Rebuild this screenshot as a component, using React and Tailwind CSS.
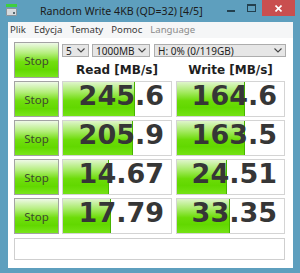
import React from 'react';

const rows = [
  { read: '245.6', write: '164.6', rw: 72, ww: 68 },
  { read: '205.9', write: '163.5', rw: 70, ww: 68 },
  { read: '14.67', write: '24.51', rw: 46, ww: 50 },
  { read: '17.79', write: '33.35', rw: 48, ww: 53 },
];

const greenBar =
  'bg-[linear-gradient(to_bottom,#dff5cb_0%,#a4ea62_30%,#6cdc08_55%,#62d800_75%,#74e214_100%)]';

function Chevron() {
  return (
    <svg width="8" height="5" viewBox="0 0 8 5" className="shrink-0">
      <path d="M0.5 0.5 L4 4 L7.5 0.5" fill="none" stroke="#444" strokeWidth="1.1" />
    </svg>
  );
}

function Dropdown({ className, children }) {
  return (
    <div
      className={`h-[13px] flex items-center justify-between pl-[3px] pr-[3px] border border-[#adadad] bg-[#e6e6e6] text-[10px] leading-none text-[#222] ${className}`}
    >
      <span>{children}</span>
      <Chevron />
    </div>
  );
}

function StopButton() {
  return (
    <div className="w-[45px] h-full flex items-center justify-center border border-[#a3a3a3] bg-[linear-gradient(to_bottom,#eef9e6_0%,#b4ee7c_30%,#72de10_55%,#62d800_78%,#7ae61c_100%)]">
      <span className="text-[11.5px] leading-none pt-[2px] text-[#3d4a2e]">Stop</span>
    </div>
  );
}

function Cell({ value, bar, className }) {
  return (
    <div className={`relative h-full border border-[#d4d4d4] bg-white overflow-hidden ${className}`}>
      <div
        className={`absolute left-0 top-0 bottom-0 border-r border-[#48b400] ${greenBar}`}
        style={{ width: bar }}
      />
      <div className="relative text-right pr-[7px] font-['DejaVu_Sans',sans-serif] font-bold text-[27px] leading-[28px] text-[#363636]">
        {value}
      </div>
    </div>
  );
}

export default function App() {
  return (
    <div className="w-[300px] h-[273px] bg-[#5e9fbe] flex flex-col overflow-hidden font-['Noto_Sans',sans-serif]">
      {/* Title bar */}
      <div className="h-[22px] flex items-start shrink-0">
        <div className="ml-[6px] mt-[4px] w-[11px] h-[12px] flex flex-col">
          <div className="h-[3px] bg-[#3fcf3f]" />
          <div className="mt-[1px] h-[8px] rounded-[1px] bg-[#d6dadd] border border-[#8c959b] flex items-end justify-end p-[1px]">
            <div className="w-[2px] h-[2px] bg-[#5a6a72]" />
          </div>
        </div>
        <div className="ml-[23px] mt-[4px] text-[10.6px] leading-[14px] text-[#1b1b1b] whitespace-nowrap">
          Random Write 4KB (QD=32) [4/5]
        </div>
        <div className="flex-1" />
        <div className="mt-[10px] w-[8px] h-[2px] bg-[#23404e]" />
        <div className="ml-[12px] mt-[4px] w-[9px] h-[8px] border border-[#23404e] border-t-2" />
        <div className="ml-[6px] mr-[5px] w-[33px] h-[16px] bg-[#c94f4f] flex items-center justify-center">
          <svg width="7" height="7" viewBox="0 0 7 7">
            <path d="M0.5 0.5 L6.5 6.5 M6.5 0.5 L0.5 6.5" stroke="#fff" strokeWidth="1.6" />
          </svg>
        </div>
      </div>

      {/* Client area */}
      <div className="ml-[8px] w-[285px] h-[246px] bg-white flex flex-col">
        <div className="h-[16px] bg-[#f5f6f7] flex items-center pl-[2px] gap-[8px] text-[9.6px] leading-none text-[#3a3a3a]">
          <span>Plik</span>
          <span>Edycja</span>
          <span>Tematy</span>
          <span>Pomoc</span>
          <span className="text-[#8a8a8a]">Language</span>
        </div>

        <div className="px-[6px] pt-[4px] flex flex-col gap-[3px]">
          <div className="h-[36px] flex">
            <StopButton />
            <div className="ml-[3px] flex flex-col">
              <div className="mt-[2px] flex">
                <Dropdown className="w-[27px]">5</Dropdown>
                <Dropdown className="ml-[3px] w-[58px]">1000MB</Dropdown>
                <Dropdown className="ml-[4px] w-[132px]">H: 0% (0/119GB)</Dropdown>
              </div>
              <div className="mt-[6px] flex font-['DejaVu_Sans',sans-serif] font-bold text-[12px] leading-[14px] text-[#1e1e1e]">
                <div className="w-[110px] text-center">Read [MB/s]</div>
                <div className="ml-[4px] w-[109px] text-center">Write [MB/s]</div>
              </div>
            </div>
          </div>

          {rows.map((r) => (
            <div key={r.read} className="h-[36px] flex">
              <StopButton />
              <Cell value={r.read} bar={r.rw} className="ml-[3px] w-[110px]" />
              <Cell value={r.write} bar={r.ww} className="ml-[4px] w-[109px]" />
            </div>
          ))}

          <div className="mt-[1px] h-[22px] w-[271px] border border-[#cfcfcf] bg-white" />
        </div>
      </div>
    </div>
  );
}
